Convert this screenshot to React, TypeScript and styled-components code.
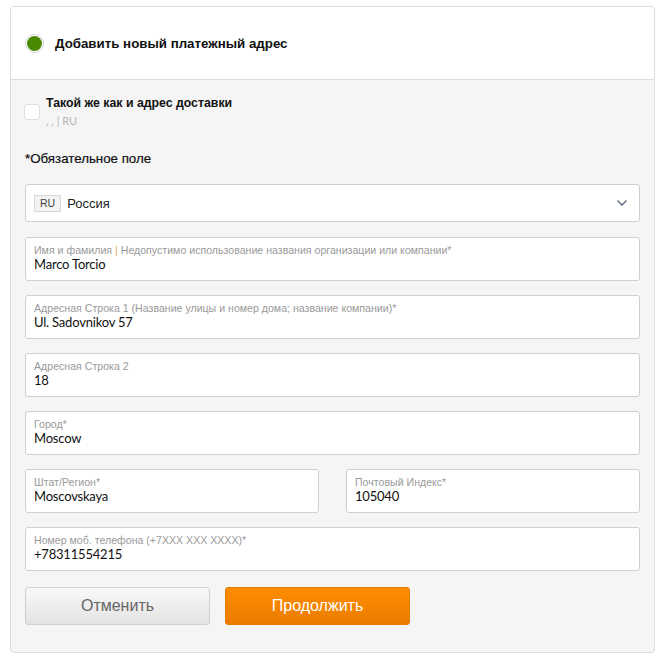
import React from "react";
import styled, { createGlobalStyle } from "styled-components";

const Global = createGlobalStyle`
  html, body { margin: 0; padding: 0; background: #fff; }
  body { font-family: Lato, "Liberation Sans", Arial, sans-serif; color: #222; }
  * { box-sizing: border-box; }
`;

const Card = styled.div`
  margin: 6px 5px 0 10px;
  width: 645px;
  border: 1px solid #dcdcdc;
  border-radius: 4px;
  background: #f5f5f5;
  overflow: hidden;
`;

const Header = styled.div`
  height: 73px;
  background: #fff;
  border-bottom: 1px solid #dcdcdc;
  display: flex;
  align-items: center;
  padding-left: 14px;
  gap: 11px;
`;

const Radio = styled.span`
  width: 19px;
  height: 19px;
  border-radius: 50%;
  border: 1px solid #d6d6d6;
  background: #fff;
  display: flex;
  align-items: center;
  justify-content: center;
  &::after {
    content: "";
    width: 15px;
    height: 15px;
    border-radius: 50%;
    background: #4a8a00;
  }
`;

const Title = styled.div`
  font-family: "Liberation Sans", Arial, sans-serif;
  font-weight: 700;
  font-size: 13.3px;
  color: #111;
`;

const Body = styled.div`
  padding: 16px 14px 27px 13px;
  display: flex;
  flex-direction: column;
`;

const SameRow = styled.div`
  display: flex;
  align-items: flex-start;
  gap: 6px;
`;

const Check = styled.span`
  margin-top: 8px;
  width: 16px;
  height: 16px;
  border: 1px solid #dcdcdc;
  border-radius: 3px;
  background: #fff;
  flex: none;
`;

const SameText = styled.div`
  display: flex;
  flex-direction: column;
  gap: 4px;
`;

const SameLabel = styled.div`
  font-family: "Liberation Sans", Arial, sans-serif;
  font-weight: 700;
  font-size: 12.3px;
  color: #111;
  line-height: 14px;
`;

const SameSub = styled.div`
  font-size: 11px;
  color: #b5b5b5;
  line-height: 13px;
`;

const Inner = styled.div`
  padding-left: 1px;
  display: flex;
  flex-direction: column;
`;

const Required = styled.div`
  font-family: "Liberation Sans", Arial, sans-serif;
  font-size: 13.3px;
  color: #111;
  margin-top: 24px;
  line-height: 15px;
  -webkit-text-stroke: 0.2px #111;
`;

const Select = styled.div`
  margin-top: 18px;
  height: 38px;
  border: 1px solid #cfcfcf;
  border-radius: 3px;
  background: #fff;
  display: flex;
  align-items: center;
  padding: 0 11px 0 8px;
  gap: 6px;
`;

const Badge = styled.span`
  font-family: "Liberation Sans", Arial, sans-serif;
  font-size: 10.5px;
  color: #444;
  background: #f3f3f3;
  border: 1px solid #d8d8d8;
  height: 17px;
  padding: 0 5px;
  display: flex;
  align-items: center;
`;

const SelectText = styled.span`
  font-family: "Liberation Sans", Arial, sans-serif;
  font-size: 13px;
  color: #222;
  flex: 1;
`;

const Fields = styled.div`
  margin-top: 15px;
  display: flex;
  flex-direction: column;
  gap: 14px;
`;

const Row = styled.div`
  display: grid;
  grid-template-columns: 294px 294px;
  justify-content: space-between;
`;

const Field = styled.div`
  height: 44px;
  border: 1px solid #cfcfcf;
  border-radius: 3px;
  background: #fff;
  padding: 6px 8px 0 8px;
  display: flex;
  flex-direction: column;
`;

const Label = styled.div`
  font-family: "Liberation Sans", Arial, sans-serif;
  font-size: 10.6px;
  color: #9a9a9a;
  line-height: 13px;
  white-space: nowrap;
`;

const Value = styled.div`
  font-size: 13px;
  letter-spacing: -0.2px;
  color: #111;
  line-height: 16px;
  margin-top: -1px;
`;

const Buttons = styled.div`
  margin-top: 16px;
  display: flex;
  gap: 15px;
`;

const Btn = styled.button<{ $primary?: boolean }>`
  width: 185px;
  height: 38px;
  border-radius: 3px;
  font-family: "Liberation Sans", Arial, sans-serif;
  font-size: 16px;
  cursor: pointer;
  border: 1px solid ${(p) => (p.$primary ? "#e87e00" : "#cfcfcf")};
  color: ${(p) => (p.$primary ? "#fff" : "#666")};
  background: ${(p) =>
    p.$primary
      ? "linear-gradient(#ff8c00, #eb7c00)"
      : "linear-gradient(#f8f8f8, #e3e3e3)"};
`;

const Chevron = () => (
  <svg width="12" height="8" viewBox="0 0 12 8">
    <path d="M1.5 1.5 L6 6 L10.5 1.5" fill="none" stroke="#6a7a8c" strokeWidth="1.6" />
  </svg>
);

type F = { label: React.ReactNode; value: string };

const InputField = ({ label, value }: F) => (
  <Field>
    <Label>{label}</Label>
    <Value>{value}</Value>
  </Field>
);

const Sep = styled.span`
  color: #e0b060;
`;

export default function App() {
  return (
    <>
      <Global />
      <Card>
        <Header>
          <Radio />
          <Title>Добавить новый платежный адрес</Title>
        </Header>
        <Body>
          <SameRow>
            <Check />
            <SameText>
              <SameLabel>Такой же как и адрес доставки</SameLabel>
              <SameSub>, , | RU</SameSub>
            </SameText>
          </SameRow>
          <Inner>
            <Required>*Обязательное поле</Required>
            <Select>
              <Badge>RU</Badge>
              <SelectText>Россия</SelectText>
              <Chevron />
            </Select>
            <Fields>
              <InputField
                label={
                  <>
                    Имя и фамилия <Sep>|</Sep> Недопустимо использование названия организации или компании*
                  </>
                }
                value="Marco Torcio"
              />
              <InputField
                label="Адресная Строка 1 (Название улицы и номер дома; название компании)*"
                value="Ul. Sadovnikov 57"
              />
              <InputField label="Адресная Строка 2" value="18" />
              <InputField label="Город*" value="Moscow" />
              <Row>
                <InputField label="Штат/Регион*" value="Moscovskaya" />
                <InputField label="Почтовый Индекс*" value="105040" />
              </Row>
              <InputField label="Номер моб. телефона (+7XXX XXX XXXX)*" value="+78311554215" />
            </Fields>
            <Buttons>
              <Btn>Отменить</Btn>
              <Btn $primary>Продолжить</Btn>
            </Buttons>
          </Inner>
        </Body>
      </Card>
    </>
  );
}
